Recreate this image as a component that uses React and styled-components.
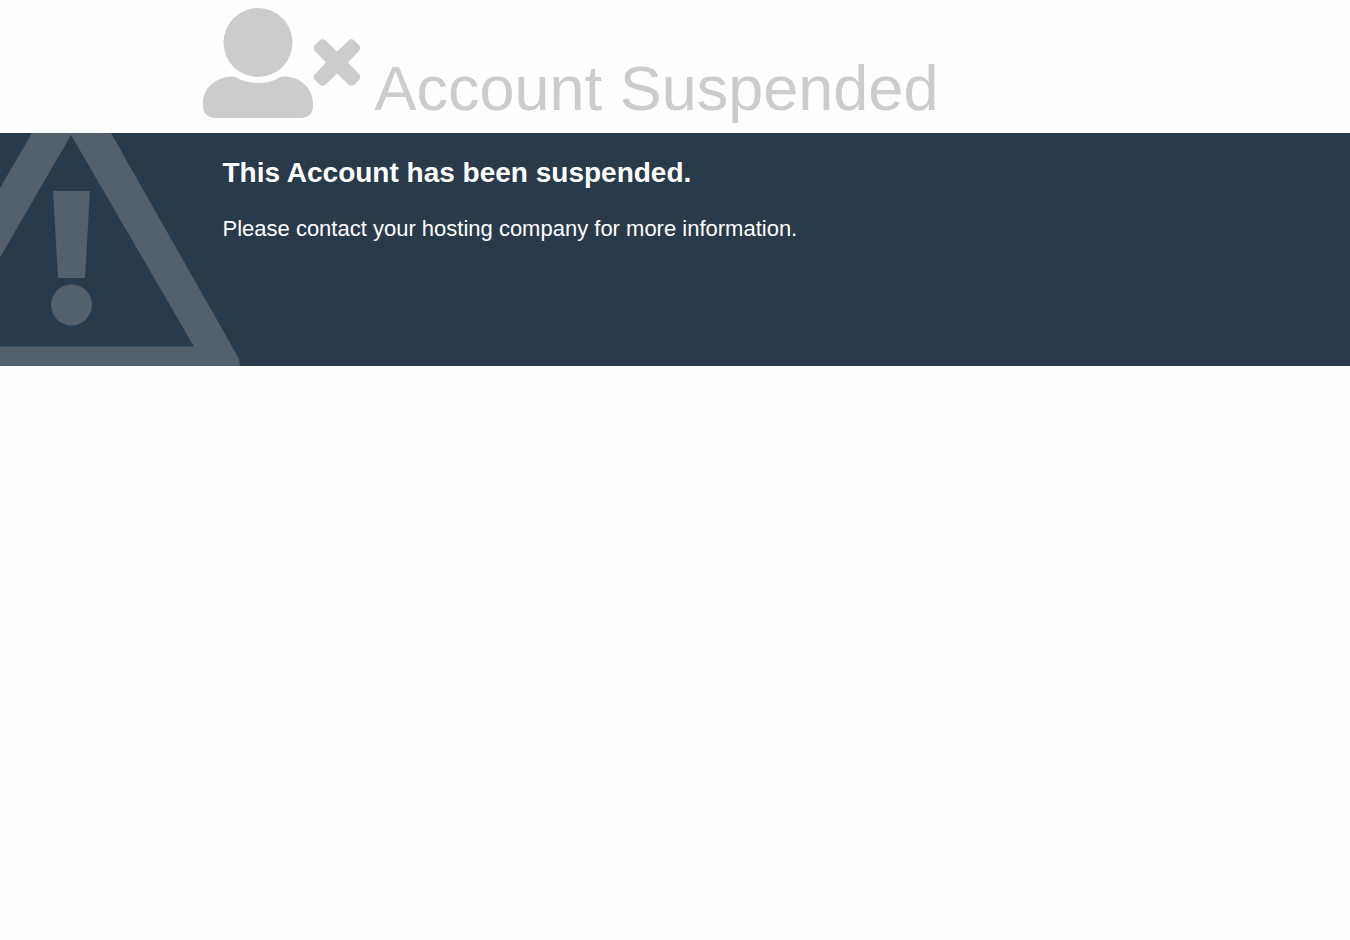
import React from 'react';
import styled, { createGlobalStyle } from 'styled-components';

const GlobalStyle = createGlobalStyle`
  body {
    margin: 0;
    background: #fefefe;
    color: #cccccc;
    font-family: "Liberation Sans", Arial, Helvetica, sans-serif;
    font-size: 22px;
    line-height: 1;
  }
`;

const Container = styled.div`
  width: 70%;
  margin: 0 auto;
`;

const Heading = styled(Container)`
  display: flex;
  align-items: flex-end;
  gap: 14px;
  padding: 8px 0 15px;
`;

const UserIcon = styled.svg`
  flex: none;
  width: 158px;
  height: 110px;
  fill: #cccccc;
`;

const Title = styled.h1`
  margin: 0;
  font-size: 63px;
  line-height: 60px;
  font-weight: normal;
`;

const Band = styled.section`
  position: relative;
  overflow: hidden;
  min-height: 233px;
  background: #293a4a;
  color: #ffffff;
`;

const WarningSign = styled.svg`
  position: absolute;
  left: 0;
  bottom: 0;
  width: 240px;
  height: 233px;
  fill: #54606c;
`;

const Message = styled.div`
  position: relative;
  padding: 24px 20px;
`;

const MessageTitle = styled.h2`
  margin: 0 0 24px;
  font-size: 28px;
  line-height: 32px;
  font-weight: bold;
`;

const MessageText = styled.p`
  margin: 0;
  font-size: 22px;
  line-height: 32px;
`;

export default function App() {
  return (
    <>
      <GlobalStyle />
      <header>
        <Heading>
          <UserIcon viewBox="0 0 158 110" aria-hidden="true">
            <circle cx="55" cy="34.5" r="34.5" />
            <path d="M29 68.5Q33 68.5 37 71.5Q45 75 55 75Q65 75 73 71.5Q77 68 82 68.5C98 69 110 81 110 95V98C110 106 105 110 97 110H13C5 110 0 106 0 98V95C0 81 12 69 29 68.5Z" />
            <path d="M116.5 32.5Q119.5 30 122.5 32.5L134 43.5L145.5 32.5Q148.5 30 151.5 32.5L156 37Q158.500 40 156 43L145 54.5L156 66Q158.5 69 156 72L151.5 76.5Q148.5 79 145.5 76.5L134 65.5L122.5 76.5Q119.5 79 116.5 76.5L112 72Q109.5 69 112 66L123 54.5L112 43Q109.5 40 112 37Z" />
          </UserIcon>
          <Title>Account Suspended</Title>
        </Heading>
      </header>
      <Band>
        <WarningSign viewBox="0 0 240 233" aria-hidden="true">
          <path fillRule="evenodd" d="M32 0H111L238 224Q240 228 240 233H0V213.5H194L71 2L0 124.5V55Z" />
          <path d="M53 58H90L85 145H58Z" />
          <circle cx="71.5" cy="172" r="20.5" />
        </WarningSign>
        <Container>
          <Message>
            <MessageTitle>This Account has been suspended.</MessageTitle>
            <MessageText>Please contact your hosting company for more information.</MessageText>
          </Message>
        </Container>
      </Band>
    </>
  );
}
